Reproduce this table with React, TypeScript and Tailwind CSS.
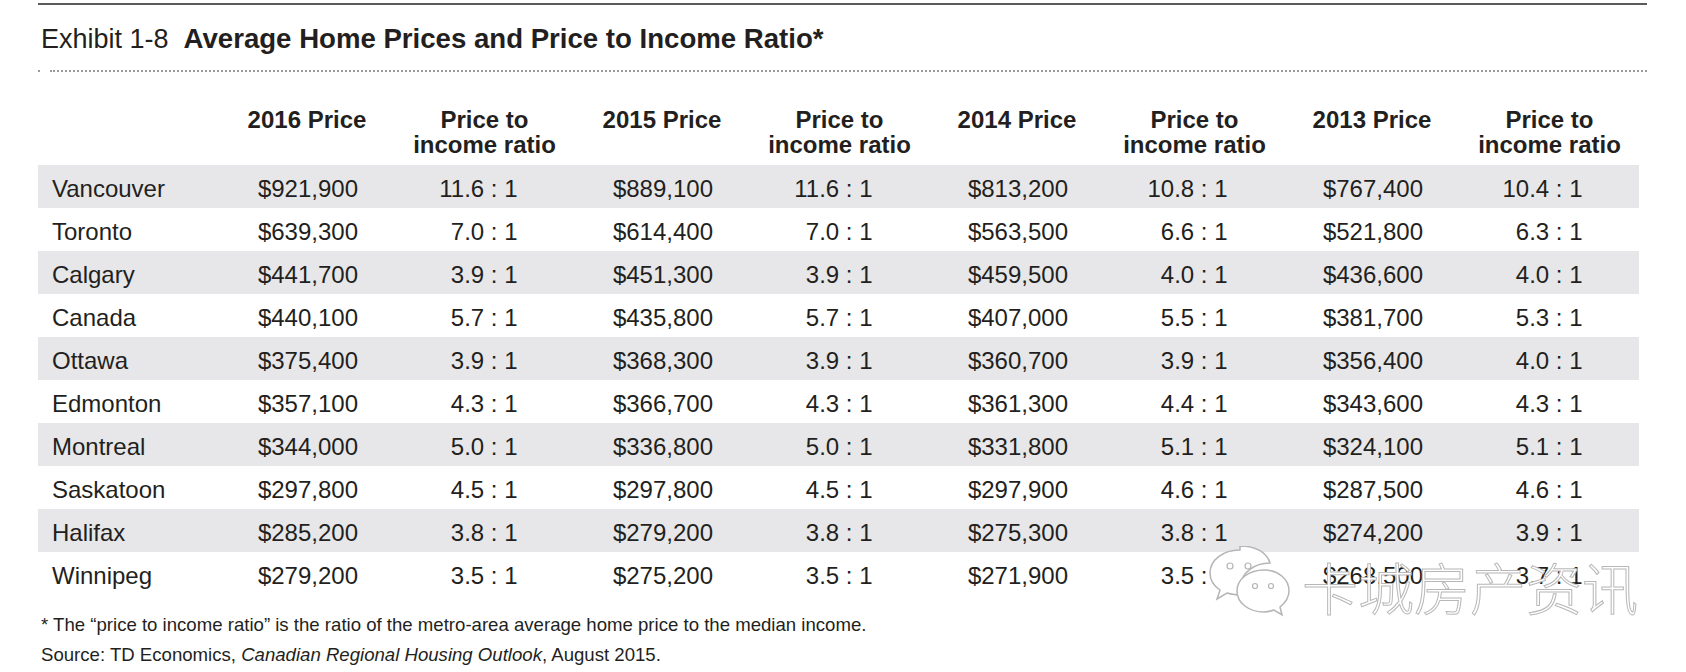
import React from 'react';

const rows: string[][] = [
  ['Vancouver', '$921,900', '11.6 : 1', '$889,100', '11.6 : 1', '$813,200', '10.8 : 1', '$767,400', '10.4 : 1'],
  ['Toronto', '$639,300', '7.0 : 1', '$614,400', '7.0 : 1', '$563,500', '6.6 : 1', '$521,800', '6.3 : 1'],
  ['Calgary', '$441,700', '3.9 : 1', '$451,300', '3.9 : 1', '$459,500', '4.0 : 1', '$436,600', '4.0 : 1'],
  ['Canada', '$440,100', '5.7 : 1', '$435,800', '5.7 : 1', '$407,000', '5.5 : 1', '$381,700', '5.3 : 1'],
  ['Ottawa', '$375,400', '3.9 : 1', '$368,300', '3.9 : 1', '$360,700', '3.9 : 1', '$356,400', '4.0 : 1'],
  ['Edmonton', '$357,100', '4.3 : 1', '$366,700', '4.3 : 1', '$361,300', '4.4 : 1', '$343,600', '4.3 : 1'],
  ['Montreal', '$344,000', '5.0 : 1', '$336,800', '5.0 : 1', '$331,800', '5.1 : 1', '$324,100', '5.1 : 1'],
  ['Saskatoon', '$297,800', '4.5 : 1', '$297,800', '4.5 : 1', '$297,900', '4.6 : 1', '$287,500', '4.6 : 1'],
  ['Halifax', '$285,200', '3.8 : 1', '$279,200', '3.8 : 1', '$275,300', '3.8 : 1', '$274,200', '3.9 : 1'],
  ['Winnipeg', '$279,200', '3.5 : 1', '$275,200', '3.5 : 1', '$271,900', '3.5 : 1', '$268,500', '3.7 : 1'],
];

const years = ['2016', '2015', '2014', '2013'];

const gridCols =
  'grid grid-cols-[165.5px_122px_148px_122px_148px_122px_148px_122px_148px] gap-x-[42.5px]';

function WeChatIcon() {
  return (
    <svg width="86" height="80" viewBox="0 0 86 80" fill="none">
      {/* back bubble */}
      <path
        d="M34 4C17 4 4 14 4 27c0 7 4 13 10 17l-3 9 10-6c4 1 8 2 13 2 1 0 2 0 3 0-1-3-2-6-2-9 0-13 13-23 29-23-3-11-15-17-30-17z"
        fill="#fff"
        stroke="#b5b5b5"
        strokeWidth="1.5"
      />
      <circle cx="24" cy="20" r="3" fill="#fff" stroke="#b5b5b5" strokeWidth="1.2" />
      <circle cx="42" cy="20" r="3" fill="#fff" stroke="#b5b5b5" strokeWidth="1.2" />
      {/* front bubble */}
      <path
        d="M58 24c-15 0-27 9-27 21s12 21 27 21c3 0 7-1 10-2l8 5-2-8c5-4 9-10 9-16 0-12-11-21-25-21z"
        fill="#fff"
        stroke="#b5b5b5"
        strokeWidth="1.5"
      />
      <circle cx="49" cy="40" r="2.5" fill="#fff" stroke="#b5b5b5" strokeWidth="1.2" />
      <circle cx="65" cy="40" r="2.5" fill="#fff" stroke="#b5b5b5" strokeWidth="1.2" />
    </svg>
  );
}

export default function App() {
  return (
    <div className="relative w-[1686px] h-[672px] overflow-hidden bg-white text-[#231f20] font-['Liberation_Sans',Arial,sans-serif]">
      <div className="ml-[38px] mt-[3px] w-[1609px] h-[2px] bg-[#5a5a5c]" />

      <h1 className="ml-[41px] mt-[20px] text-[27px] leading-[27px] whitespace-nowrap">
        <span>Exhibit 1-8</span>
        <span className="ml-[15px] font-bold text-[27.6px]">Average Home Prices and Price to Income Ratio*</span>
      </h1>

      <div className="mt-[17px] flex items-center">
        <div className="ml-[38px] w-[2px] h-[2px] bg-[#9a9a9a]" />
        <div className="ml-[10px] w-[1597px] border-t-2 border-dotted border-[#9a9a9a]" />
      </div>

      <div className={`${gridCols} ml-[38px] mt-[35px] mb-[8px] w-[1601px] text-[24px] leading-[25px] font-bold`}>
        <div />
        {years.map((y) => (
          <React.Fragment key={y}>
            <div className="text-center whitespace-nowrap">{y} Price</div>
            <div className="text-center whitespace-nowrap">
              Price to
              <br />
              income ratio
            </div>
          </React.Fragment>
        ))}
      </div>

      <div className="ml-[38px] w-[1601px] text-[24px]">
        {rows.map((r, i) => (
          <div
            key={r[0]}
            className={`${gridCols} h-[43px] items-center pt-[4px] ${i % 2 === 0 ? 'bg-[#e7e7e9]' : ''}`}
          >
            <div className="pl-[14px] whitespace-nowrap">{r[0]}</div>
            {r.slice(1).map((v, j) => (
              <div
                key={j}
                className={`text-right whitespace-nowrap ${j % 2 === 0 ? 'pr-[10px]' : 'pr-[41px]'}`}
              >
                {v}
              </div>
            ))}
          </div>
        ))}
      </div>

      <div className="ml-[41px] mt-[15px] text-[18.6px] leading-[30px]">
        <p>* The “price to income ratio” is the ratio of the metro-area average home price to the median income.</p>
        <p>
          Source: TD Economics, <i>Canadian Regional Housing Outlook</i>, August 2015.
        </p>
      </div>

      <div className="absolute left-[1206px] top-[546px] flex items-center">
        <WeChatIcon />
        <span className="ml-[10px] text-[56px] leading-[60px] text-white font-light [-webkit-text-stroke:1px_#b8b8b8] font-['Noto_Sans_CJK_SC',sans-serif]">
          卡城房产资讯
        </span>
      </div>
    </div>
  );
}
